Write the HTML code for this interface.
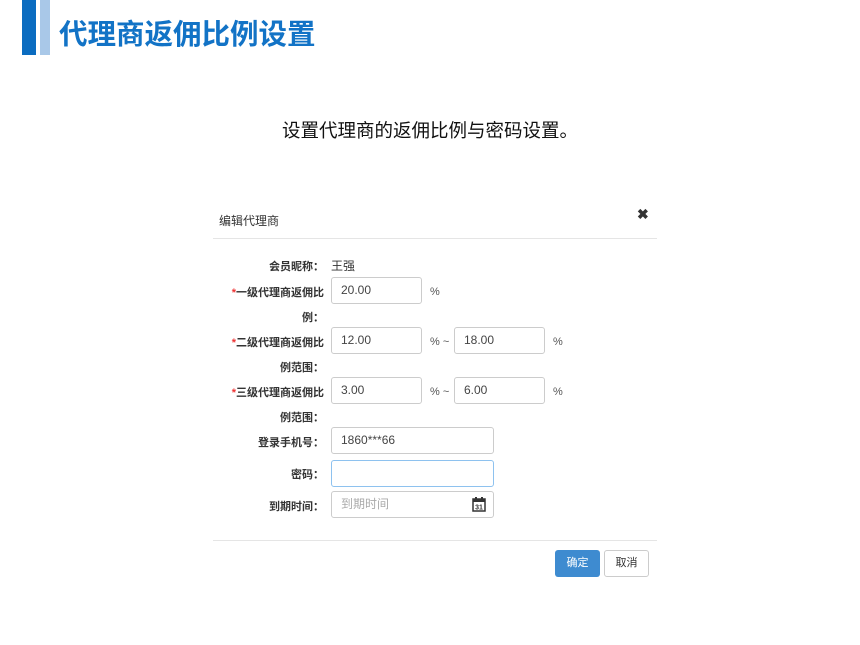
<!DOCTYPE html>
<html><head><meta charset="utf-8"><style>
body{margin:0;width:860px;height:645px;background:#fff;position:relative;overflow:hidden;font-family:"Liberation Sans","Noto Sans CJK SC",sans-serif;color:#333}
.a{position:absolute}
.lbl{position:absolute;font-size:11px;color:#333;text-align:right;width:124px;left:200px;font-weight:bold}
.inp{position:absolute;border:1px solid #ccc;border-radius:3px;box-sizing:border-box;height:27px;font-size:12px;line-height:25px;padding-left:9px;color:#444;background:#fff}
.pc{position:absolute;font-size:11px;color:#555}
.r{color:#e33}
</style></head><body>
<div class="a" style="left:22px;top:0;width:14px;height:55px;background:#0b6cc0"></div>
<div class="a" style="left:40px;top:0;width:10px;height:55px;background:#a9c8e8"></div>
<div class="a" style="left:59px;top:12px;font-size:28.5px;font-weight:bold;color:#1273c6">代理商返佣比例设置</div>
<div class="a" style="left:0;width:860px;top:117px;text-align:center;font-size:18.5px;color:#111">设置代理商的返佣比例与密码设置。</div>
<div class="a" style="left:219px;top:212px;font-size:12px;color:#333">编辑代理商</div>
<div class="a" style="left:637px;top:206px;font-size:14px;font-weight:bold;color:#333">✖</div>
<div class="a" style="left:213px;top:238px;width:444px;height:1px;background:#e5e5e5"></div>
<div class="lbl" style="top:258px">会员昵称：</div>
<div class="a" style="left:331px;top:257px;font-size:12px">王强</div>
<div class="lbl" style="top:284px"><span class="r">*</span>一级代理商返佣比</div>
<div class="lbl" style="top:309px">例：</div>
<div class="inp" style="left:331px;top:277px;width:91px">20.00</div>
<div class="pc" style="left:430px;top:286px">%</div>
<div class="lbl" style="top:334px"><span class="r">*</span>二级代理商返佣比</div>
<div class="lbl" style="top:359px">例范围：</div>
<div class="inp" style="left:331px;top:327px;width:91px">12.00</div>
<div class="pc" style="left:430px;top:336px">% ~</div>
<div class="inp" style="left:454px;top:327px;width:91px">18.00</div>
<div class="pc" style="left:553px;top:336px">%</div>
<div class="lbl" style="top:384px"><span class="r">*</span>三级代理商返佣比</div>
<div class="lbl" style="top:409px">例范围：</div>
<div class="inp" style="left:331px;top:377px;width:91px">3.00</div>
<div class="pc" style="left:430px;top:386px">% ~</div>
<div class="inp" style="left:454px;top:377px;width:91px">6.00</div>
<div class="pc" style="left:553px;top:386px">%</div>
<div class="lbl" style="top:434px">登录手机号：</div>
<div class="inp" style="left:331px;top:427px;width:163px">1860***66</div>
<div class="lbl" style="top:466px">密码：</div>
<div class="inp" style="left:331px;top:460px;width:163px;border-color:#8ec2ef"></div>
<div class="lbl" style="top:498px">到期时间：</div>
<div class="inp" style="left:331px;top:491px;width:163px;color:#aaa">到期时间</div>
<svg class="a" style="left:472px;top:497px" width="14" height="15" viewBox="0 0 14 15"><rect x="1" y="2" width="12" height="12" fill="none" stroke="#333" stroke-width="1.5"/><rect x="1" y="2" width="12" height="3" fill="#333"/><rect x="3" y="0" width="2" height="3" fill="#333"/><rect x="9" y="0" width="2" height="3" fill="#333"/><text x="7" y="12.5" font-size="7" text-anchor="middle" font-family="Liberation Sans" font-weight="bold" fill="#333">31</text></svg>
<div class="a" style="left:213px;top:540px;width:444px;height:1px;background:#e5e5e5"></div>
<div class="a" style="left:555px;top:550px;width:45px;height:27px;background:#3e8bd0;border-radius:3px;color:#fff;font-size:11px;line-height:27px;text-align:center">确定</div>
<div class="a" style="left:604px;top:550px;width:45px;height:27px;box-sizing:border-box;border:1px solid #ccc;border-radius:3px;color:#333;font-size:11px;line-height:25px;text-align:center">取消</div>
</body></html>
